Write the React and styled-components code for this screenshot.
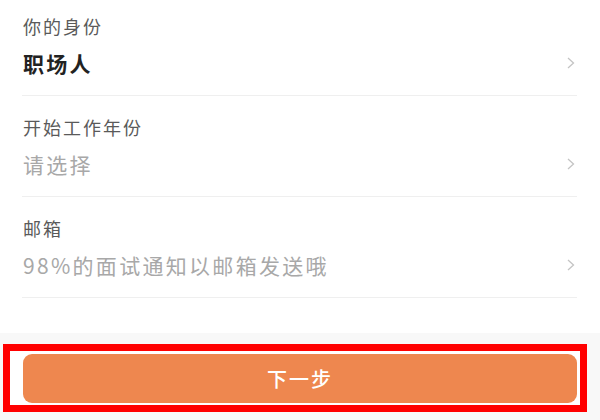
import React from 'react'
import styled, { createGlobalStyle } from 'styled-components'

const fields = [
  { label: '你的身份', value: '职场人', filled: true },
  { label: '开始工作年份', value: '请选择' },
  { label: '邮箱', value: '98%的面试通知以邮箱发送哦' },
]

const App = () => {
  return (
    <>
      <GlobalStyle />
      <Page>
        <FormCard>
          {fields.map((f) => (
            <Row key={f.label}>
              <Label>{f.label}</Label>
              <ValueLine>
                <Value filled={f.filled}>{f.value}</Value>
                <Chevron width="8" height="12" viewBox="0 0 8 12">
                  <polyline points="1,1 6.5,6 1,11" />
                </Chevron>
              </ValueLine>
            </Row>
          ))}
        </FormCard>
        <Footer>
          <Highlight>
            <NextButton>下一步</NextButton>
          </Highlight>
        </Footer>
      </Page>
    </>
  )
}

export default App

const GlobalStyle = createGlobalStyle`
  body {
    margin: 0;
    background: #ffffff;
    font-family: "Noto Sans CJK SC", "Noto Sans", sans-serif;
  }
`

const Page = styled.div`
  width: 600px;
  height: 420px;
  display: flex;
  flex-direction: column;
  overflow: hidden;
`

const FormCard = styled.div`
  background: #fff;
  padding: 0 23px 35px 22px;
`

const Row = styled.div`
  padding: 19px 0 18px 1px;
  border-bottom: 1px solid #efefef;
  &:first-child {
    padding-top: 14px;
  }
`

const Label = styled.div`
  font-size: 18px;
  line-height: 24px;
  letter-spacing: 2px;
  color: #5a5a5a;
`

const ValueLine = styled.div`
  display: flex;
  align-items: center;
  justify-content: space-between;
  margin-top: 11px;
  height: 28px;
`

const Value = styled.span`
  font-size: 21px;
  line-height: 28px;
  letter-spacing: 2.3px;
  color: ${(p) => (p.filled ? '#222' : '#a8a8a8')};
  font-weight: ${(p) => (p.filled ? 700 : 400)};
`

const Chevron = styled.svg`
  margin-right: 2px;
  fill: none;
  stroke: #c4c4c4;
  stroke-width: 1.3;
`

const Footer = styled.div`
  flex: 1;
  background: #f8f8f8;
  padding-top: 11px;
`

const Highlight = styled.div`
  margin-left: 3px;
  width: 584px;
  box-sizing: border-box;
  border: 7px solid #ff0000;
  background: #fff;
  padding: 3px 3px 2px 13px;
`

const NextButton = styled.button`
  display: block;
  width: 100%;
  height: 49px;
  border: none;
  border-radius: 9px;
  background: #ee874f;
  color: #fff;
  font-family: "Noto Sans CJK SC", "Noto Sans", sans-serif;
  font-size: 20px;
  font-weight: 500;
  letter-spacing: 2px;
  padding: 0;
`
